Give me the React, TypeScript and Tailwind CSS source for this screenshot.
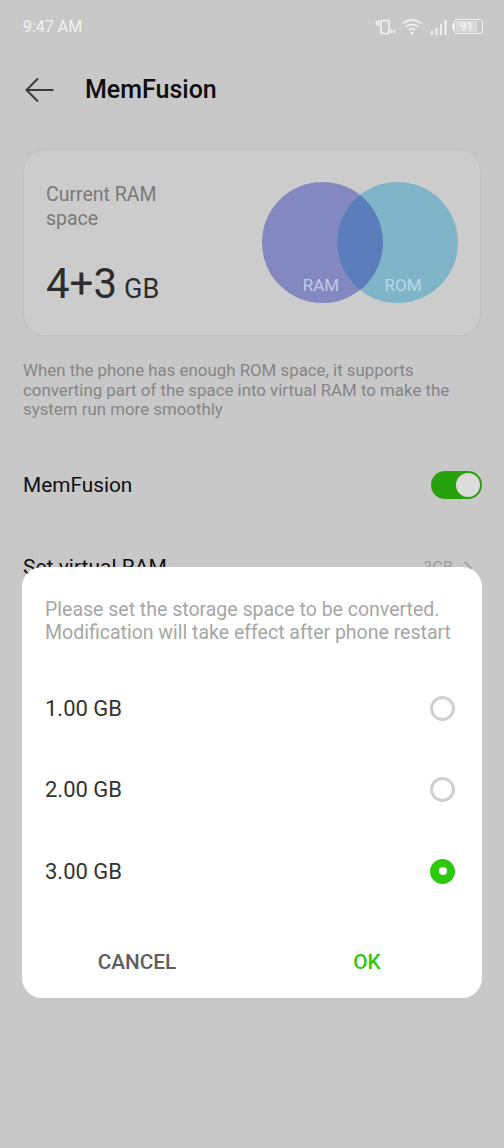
import React from "react";

const font = { fontFamily: "Roboto, sans-serif" };

function StatusIcons() {
  return (
    <div className="flex items-center">
      <svg width="21" height="18" viewBox="0 0 21 18" fill="none" className="mr-[6px]">
        <rect x="6" y="2.5" width="8" height="13" rx="1.2" stroke="#f4f4f4" strokeWidth="1.6" />
        <path d="M1.5 3v4M3.6 2v6M16.5 11v4M19.4 12v3" stroke="#f4f4f4" strokeWidth="1.5" />
      </svg>
      <svg width="20" height="17" viewBox="0 0 20 17" fill="none" className="mr-[9px]">
        <path d="M1 5.5C6 1 14 1 19 5.5M4 8.8c3.5-3 8.500-3 12 0M7 12c1.800-1.500 4.200-1.500 6 0" stroke="#f4f4f4" strokeWidth="1.6" />
        <circle cx="10" cy="15" r="1.500" fill="#f4f4f4" />
      </svg>
      <svg width="16" height="16" viewBox="0 0 16 16" fill="#f4f4f4" className="mr-[5px]">
        <rect x="0" y="12" width="2" height="4" opacity="0.9" />
        <rect x="4.500" y="9" width="2" height="7" opacity="0.9" />
        <rect x="9" y="5" width="2" height="11" opacity="0.9" />
        <rect x="13.500" y="1" width="2" height="15" />
      </svg>
      <div className="flex items-center mr-[21px]">
        <div className="h-[7px] w-[2px] rounded-l-sm bg-[#f0f0f0]" />
        <div className="flex h-[15px] w-[29px] items-center rounded-[3px] border border-[#f0f0f0] p-[1px]">
          <div className="flex h-full w-[21px] items-center justify-center overflow-hidden bg-[#dadada] text-[11px] leading-none text-[#fafafa]">91</div>
        </div>
      </div>
    </div>
  );
}

function Venn() {
  return (
    <svg width="196" height="121" viewBox="0 0 196 121" className="absolute left-[238px] top-[32px]">
      <circle cx="60.500" cy="60.500" r="60.500" fill="#8488c0" />
      <circle cx="135.500" cy="60.500" r="60.500" fill="#80b4c8" />
      <path d="M98 13a60.500 60.500 0 0 1 0 95a60.500 60.500 0 0 1 0-95z" fill="#5c7dbb" />
      <text x="59" y="109" textAnchor="middle" fontSize="17" fill="#c3c8e0" style={font}>RAM</text>
      <text x="141" y="109" textAnchor="middle" fontSize="17" fill="#bcd8e2" style={font}>ROM</text>
    </svg>
  );
}

function Option({ label, checked }: { label: string; checked?: boolean }) {
  return (
    <div className="flex h-[81.500px] items-center justify-between pl-[23px] pr-[27px]">
      <span className="text-[22px] text-[#333333]">{label}</span>
      {checked ? (
        <div className="flex h-[25px] w-[25px] items-center justify-center rounded-full bg-[#2ec80c]">
          <div className="h-[8px] w-[8px] rounded-full bg-white" />
        </div>
      ) : (
        <div className="h-[25px] w-[25px] rounded-full border-[3px] border-[#d0d0d0]" />
      )}
    </div>
  );
}

export default function App() {
  return (
    <div className="relative h-[1148px] w-[504px] overflow-hidden bg-[#c8c8c8]" style={font}>
      <div className="flex h-[50px] items-center justify-between pl-[23px] pt-[3px]">
        <span className="text-[16px] text-[#f2f2f2]">9:47 AM</span>
        <StatusIcons />
      </div>

      <div className="mt-[12px] flex h-[56px] items-center pl-[25px]">
        <svg width="29" height="26" viewBox="0 0 29 26" fill="none">
          <path d="M13 1.500L1.500 13L13 24.500M1.500 13H28.500" stroke="#3a3a3a" strokeWidth="2" />
        </svg>
        <h1 className="ml-[31px] text-[25px] font-medium text-[#0c0c0c]">MemFusion</h1>
      </div>

      <div className="relative mx-[23px] mt-[31px] h-[187px] rounded-[22px] border border-[#bfbfbf] bg-[#cccccc] pl-[22px] pt-[33px]">
        <p className="w-[130px] text-[19.500px] leading-[24px] text-[#797979]">Current RAM space</p>
        <p className="mt-[25px] flex items-baseline leading-[56px] text-[#2c2c2c]">
          <span className="text-[42px]">4+3</span>
          <span className="ml-[7px] text-[27px]">GB</span>
        </p>
        <Venn />
      </div>

      <p className="mx-[23px] mt-[25px] text-[16.850px] leading-[19.700px] text-[#858585]">
        When the phone has enough ROM space, it supports converting part of the space into virtual RAM to make the system run more smoothly
      </p>

      <div className="mt-[51px] flex h-[28px] items-center justify-between pl-[23px] pr-[22px]">
        <span className="text-[20.800px] text-[#0e0e0e]">MemFusion</span>
        <div className="flex h-[28px] w-[51px] items-center justify-end rounded-full bg-[#27a20c] pr-[2px]">
          <div className="h-[24px] w-[24px] rounded-full bg-[#dcdcdc]" />
        </div>
      </div>

      <div className="mt-[55px] flex h-[28px] items-center justify-between pl-[23px] pr-[31px]">
        <span className="text-[21px] text-[#0e0e0e]">Set virtual RAM</span>
        <div className="flex items-center gap-[10px] text-[16px] text-[#9a9a9a]">
          <span>3GB</span>
          <svg width="10" height="16" viewBox="0 0 10 16" fill="none">
            <path d="M1.500 1.500L8 8L1.500 14.500" stroke="#9a9a9a" strokeWidth="1.600" />
          </svg>
        </div>
      </div>

      {/* dialog over the page */}
      <div className="absolute left-[22px] top-[567px] h-[431px] w-[460px] rounded-[20px] bg-white">
        <p className="px-[23px] pt-[31px] text-[19.500px] leading-[23px] text-[#a6a6a6]">
          Please set the storage space to be converted. Modification will take effect after phone restart
        </p>
        <div className="mt-[23.500px]">
          <Option label="1.00 GB" />
          <Option label="2.00 GB" />
          <Option label="3.00 GB" checked />
        </div>
        <div className="mt-[22.500px] flex h-[56px] items-center">
          <button className="flex-1 text-[20.800px] font-medium text-[#5e5e5e]">CANCEL</button>
          <button className="flex-1 text-[20.800px] font-medium text-[#32c80c]">OK</button>
        </div>
      </div>
    </div>
  );
}
